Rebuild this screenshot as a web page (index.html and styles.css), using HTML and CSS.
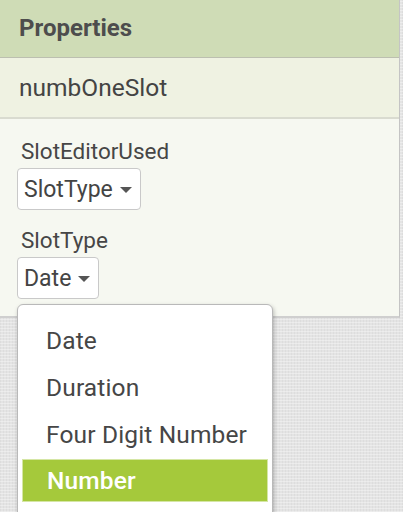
FILE: index.html
```html
<!DOCTYPE html>
<html>
<head>
<meta charset="utf-8">
<link rel="stylesheet" href="styles.css">
</head>
<body>
<div class="panel">
  <div class="header">Properties</div>
  <div class="name">numbOneSlot</div>
  <div class="body">
    <div class="prop">
      <div class="label">SlotEditorUsed</div>
      <div class="select">SlotType <span class="caret"></span></div>
    </div>
    <div class="prop">
      <div class="label">SlotType</div>
      <div class="select">Date <span class="caret"></span></div>
    </div>
  </div>
</div>
<div class="menu">
  <div class="item">Date</div>
  <div class="item">Duration</div>
  <div class="item">Four Digit Number</div>
  <div class="item selected">Number</div>
</div>
</body>
</html>
```
FILE: styles.css
```css
html, body {
  margin: 0;
  padding: 0;
}
body {
  width: 403px;
  height: 512px;
  overflow: hidden;
  background-color: #e4e4e4;
  background-image:
    repeating-linear-gradient(0deg, rgba(255,255,255,0.35) 0 1px, transparent 1px 3px),
    repeating-linear-gradient(90deg, rgba(200,200,200,0.25) 0 1px, transparent 1px 3px);
  font-family: Roboto, "Noto Sans", sans-serif;
  color: #464646;
  position: relative;
}
.panel {
  width: 400px;
  border-right: 1px solid #c4c4c4;
  border-bottom: 2px solid #cfcfcf;
  box-sizing: border-box;
}
.header {
  height: 57px;
  background: #cfdcb6;
  border-bottom: 1px solid #bcbfb0;
  padding-left: 19px;
  font-weight: bold;
  font-size: 24px;
  line-height: 57px;
  color: #4d4d4d;
}
.name {
  height: 59px;
  background: #eff2e2;
  border-bottom: 2px solid #d9dbd0;
  padding-left: 19px;
  font-size: 24.5px;
  line-height: 60px;
  color: #444;
}
.body {
  background: #f6f8f1;
  padding: 19px 0 17px 17px;
  display: flex;
  flex-direction: column;
  gap: 17px;
}
.label {
  font-size: 22.5px;
  line-height: 26px;
  padding-left: 4px;
  margin-bottom: 4px;
  color: #464646;
}
.select {
  display: inline-flex;
  align-items: center;
  gap: 7px;
  height: 40px;
  padding: 0 8px 0 6px;
  background: #fff;
  border: 1px solid #c9c9c9;
  border-radius: 4px;
  font-size: 23px;
  color: #444;
}
.caret {
  width: 0;
  height: 0;
  border-left: 6px solid transparent;
  border-right: 6px solid transparent;
  border-top: 6px solid #555;
  margin-top: 2px;
}
.menu {
  position: absolute;
  left: 17px;
  top: 304px;
  width: 256px;
  height: 230px;
  box-sizing: border-box;
  background: #fff;
  border: 1px solid #b9b9b9;
  border-radius: 6px;
  box-shadow: 1px 2px 4px rgba(0,0,0,0.25);
  padding: 12px 4px 0 4px;
}
.item {
  height: 47px;
  line-height: 47px;
  padding-left: 24px;
  font-size: 24.5px;
  letter-spacing: 0.15px;
  color: #464646;
}
.selected {
  background: #a5c93b;
  color: #fff;
  font-weight: 500;
  border: 1px solid #d5e6a5;
  height: 41px;
  line-height: 41px;
  margin-top: 1px;
}
```
